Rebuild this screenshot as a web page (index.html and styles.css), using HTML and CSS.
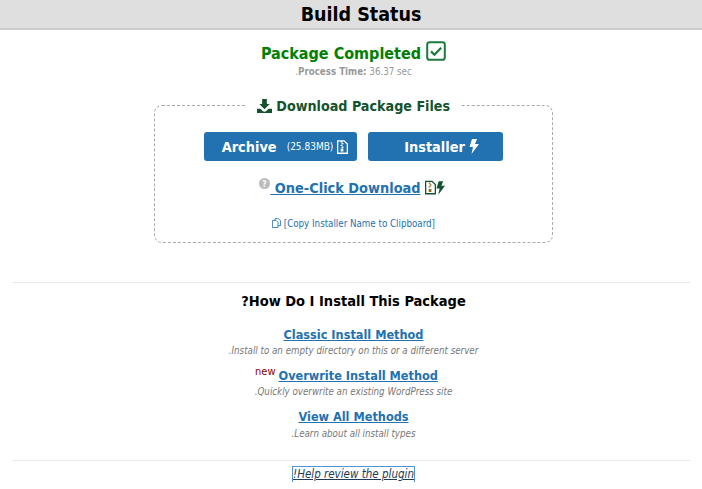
FILE: index.html
```html
<!DOCTYPE html>
<html lang="en">
<head>
<meta charset="utf-8">
<title>Build Status</title>
<link rel="stylesheet" href="styles.css">
</head>
<body>
<header class="hdr">Build Status</header>
<main class="main">
  <section class="status">
    <div class="done">Package Completed
      <svg class="i-check" viewBox="0 0 20 20"><rect x="1.2" y="1.2" width="17.6" height="17.6" rx="2.4" fill="none" stroke="currentColor" stroke-width="2"/><path d="M5 10.4l3.4 3.4L15.2 6.8" fill="none" stroke="currentColor" stroke-width="2.2"/></svg>
    </div>
    <div class="time rtl"><b>Process Time:</b> 36.37 sec.</div>
  </section>

  <fieldset class="box">
    <legend class="legend">
      <svg class="i-dl" viewBox="0 0 16 16"><path fill="currentColor" d="M5.5 1h5v5.5h3L8 12 2.500 6.500h3zM0 11.500h3.800L6 13.800c1.100 1 2.900 1 4 0l2.200-2.300H16V16H0z"/></svg>
      Download Package Files
    </legend>
    <div class="btns">
      <a class="btn btn-a" href="#"><span>Archive</span> <small>(25.83MB)</small>
        <svg class="i-zip" viewBox="0 0 12 15"><path fill="none" stroke="currentColor" stroke-width="1.400" d="M.7.7h7l3.600 3.600v10H.7z"/><path fill="currentColor" d="M4 1h2v1.500H4zM5 3h2v1.500H5zM4 5h2v1.500H4zM5 7h2v1.500H5zM4 9h3v3.500H4z"/></svg>
      </a>
      <a class="btn btn-b" href="#"><span>Installer</span>
        <svg class="i-bolt" viewBox="0 0 10 15"><path fill="currentColor" d="M3 0h5L6 5h4L2.500 15 4 8H.5z"/></svg>
      </a>
    </div>
    <div class="oneclick">
      <svg class="i-help" viewBox="0 0 12 12"><circle cx="6" cy="6" r="6" fill="#bbb"/><text x="6" y="9.500" class="i-help-t">?</text></svg><a class="one-link" href="#">&nbsp;One-Click Download</a>
      <span class="one-icons">
        <svg class="i-zip2" viewBox="0 0 12 15"><path fill="#fff" stroke="currentColor" stroke-width="1.400" d="M.7.7h7l3.600 3.600v10H.7z"/><path fill="#8a6d1f" d="M4 2h2v1.500H4zM5 4h2v1.500H5zM4 6h2v1.500H4zM4 9h3v3.500H4z"/></svg><svg class="i-bolt2" viewBox="0 0 10 15"><path fill="currentColor" d="M3 0h5L6 5h4L2.500 15 4 8H.5z"/></svg>
      </span>
    </div>
    <div class="copy">
      <svg class="i-copy" viewBox="0 0 12 13"><path fill="none" stroke="currentColor" stroke-width="1.100" d="M4 3V.6h4.500L11.400 3.500V10H8M.6 3H5.500L8 5.500v7H.6z"/></svg>
      <a class="copy-link rtl" href="#">[Copy Installer Name to Clipboard]</a>
    </div>
  </fieldset>

  <hr class="rule rule-a">
  <h2 class="how rtl">How Do I Install This Package?</h2>

  <div class="method m1">
    <a class="m-link" href="#">Classic Install Method</a>
    <div class="note rtl">Install to an empty directory on this or a different server.</div>
  </div>
  <div class="method m2">
    <div class="m2-row"><sup class="new">new</sup><a class="m-link" href="#">Overwrite Install Method</a></div>
    <div class="note rtl">Quickly overwrite an existing WordPress site.</div>
  </div>
  <div class="method m3">
    <a class="m-link" href="#">View All Methods</a>
    <div class="note rtl">Learn about all install types.</div>
  </div>

  <hr class="rule rule-b">
  <div class="review"><a class="review-link rtl" href="#">Help review the plugin!</a></div>
</main>
</body>
</html>
```
FILE: styles.css
```css
* { box-sizing: border-box; }
html, body { margin: 0; padding: 0; }
body {
  background: #fff;
  color: #000;
  font-family: "DejaVu Sans", Verdana, sans-serif;
  font-stretch: condensed;
  overflow: hidden;
}
a { color: #2271b1; }
.rtl { direction: rtl; }
.hdr {
  height: 30px;
  padding-left: 20px;
  background: #dfdfdf;
  border-bottom: 2px solid #ccc;
  font-size: 19.500px;
  line-height: 29px;
  font-weight: 700;
  text-align: center;
}
.main { padding-left: 5px; text-align: center; }
.status { padding-top: 11px; }
.done {
  color: #008000;
  font-size: 16px;
  font-weight: 700;
  line-height: 24px;
}
.i-check { width: 20px; height: 20px; vertical-align: -2px; color: #1c7a3c; }
.time { color: #999; font-size: 9.700px; line-height: 12px; }
.box {
  width: 399px;
  height: 147px;
  margin: 18px auto 0;
  padding: 0;
  border: 1px dashed #aaa;
  border-radius: 8px;
}
.legend {
  padding: 2px 11px 0;
  color: #14532d;
  font-size: 14.200px;
  font-weight: 700;
  line-height: 17px;
}
.i-dl { width: 15px; height: 15px; vertical-align: -2px; }
.btns { display: flex; justify-content: center; gap: 11px; margin-top: 17px; }
.btn {
  display: flex;
  align-items: center;
  justify-content: center;
  gap: 4px;
  height: 29px;
  background: #2271b1;
  border-radius: 3px;
  color: #fff;
  font-size: 14.400px;
  font-weight: 700;
  text-decoration: none;
}
.btn small { font-size: 10px; font-weight: 400; margin-left: 6px; }
.btn-a { width: 153px; padding-left: 9px; }
.btn-b { width: 135px; padding-left: 12px; }
.i-zip { width: 11px; height: 14px; }
.i-bolt { width: 10px; height: 15px; }
.oneclick { margin-top: 17px; line-height: 20px; font-size: 14.400px; padding-right: 3px; }
.i-help { width: 11px; height: 11px; vertical-align: 4px; }
.i-help-t { font-size: 9px; font-weight: 700; fill: #fff; text-anchor: middle; }
.one-link { font-weight: 700; }
.one-icons { color: #14532d; white-space: nowrap; }
.i-zip2 { width: 11px; height: 15px; vertical-align: -2px; }
.i-bolt2 { width: 9px; height: 14px; vertical-align: -2px; }
.copy { margin-top: 20px; font-size: 9.700px; line-height: 12px; color: #2271b1; }
.i-copy { width: 9px; height: 10px; vertical-align: -1px; }
.copy-link { text-decoration: none; }
.rule { border: 0; border-top: 1px solid #e9e9e9; margin: 0 12px 0 7px; }
.rule-a { margin-top: 39px; }
.how { margin: 10px 0 0; font-size: 14.500px; line-height: 17px; font-weight: 700; }
.method { line-height: 16px; }
.m1 { margin-top: 16px; }
.m2 { margin-top: 9px; }
.m2-row { padding-right: 14px; }
.m3 { margin-top: 9px; }
.m-link { font-size: 12.600px; font-weight: 700; }
.note { color: #777; font-size: 9.700px; font-style: italic; line-height: 14px; margin-top: 1px; }
.m3 .note { margin-top: 2px; }
.new { color: #8b0000; font-size: 11px; line-height: 0; vertical-align: 5px; margin-right: 3px; }
.rule-b { margin-top: 19px; }
.review { margin-top: 6px; font-size: 11.500px; line-height: 15px; }
.review-link {
  display: inline-block;
  color: #1d3a57;
  font-style: italic;
  outline: 1px solid #4f94d4;
}
```
